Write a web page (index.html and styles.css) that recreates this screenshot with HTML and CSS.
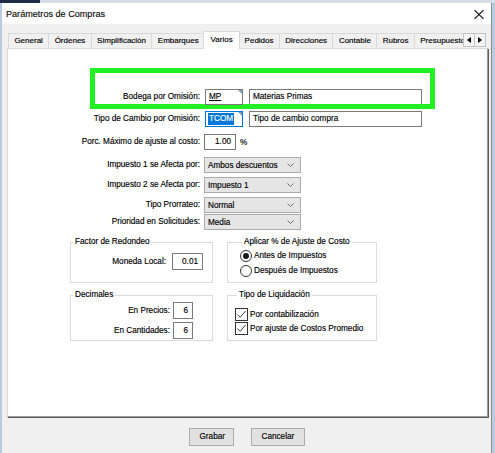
FILE: index.html
```html
<!DOCTYPE html>
<html lang="es">
<head>
<meta charset="utf-8">
<title>Parámetros de Compras</title>
<link rel="stylesheet" href="styles.css">
</head>
<body>
<div class="desk"><div class="desk-dark"></div></div>
<div class="window">
  <div class="titlebar">
    <span class="title">Parámetros de Compras</span>
    <svg class="close" width="10" height="9" viewBox="0 0 10 9"><path d="M0.5 0L9.5 9M9.5 0L0.5 9" stroke="#1a1a1a" stroke-width="1.1" fill="none"/></svg>
  </div>
  <div class="content">
    <div class="tabs">
      <div class="tablist">
        <div class="tab">General</div>
        <div class="tab">Órdenes</div>
        <div class="tab">Simplificación</div>
        <div class="tab">Embarques</div>
        <div class="tab active">Varios</div>
        <div class="tab">Pedidos</div>
        <div class="tab">Direcciones</div>
        <div class="tab">Contable</div>
        <div class="tab">Rubros</div>
        <div class="tab">Presupuestos</div>
      </div>
      <div class="tab-scroll">
        <div class="scroll-btn"><svg width="4" height="6" viewBox="0 0 4 6"><path d="M4 0L0 3L4 6Z" fill="#000"/></svg></div>
        <div class="scroll-btn"><svg width="4" height="6" viewBox="0 0 4 6"><path d="M0 0L4 3L0 6Z" fill="#000"/></svg></div>
      </div>
    </div>
    <div class="panel">
      <div class="highlight"></div>
      <div class="form">
        <label class="lbl">Bodega por Omisión:</label>
        <div class="ctrl"><div class="input code lookup"><u>MP</u></div><div class="input desc">Materias Primas</div></div>

        <label class="lbl">Tipo de Cambio por Omisión:</label>
        <div class="ctrl"><div class="input code lookup focus"><span class="sel">TCOM</span></div><div class="input desc">Tipo de cambio compra</div></div>

        <label class="lbl">Porc. Máximo de ajuste al costo:</label>
        <div class="ctrl"><div class="input num pct">1.00</div><span class="unit">%</span></div>

        <label class="lbl">Impuesto 1 se Afecta por:</label>
        <div class="ctrl"><div class="select"><span>Ambos descuentos</span><svg width="7" height="4" viewBox="0 0 7 4"><path d="M0.5 0.5L3.5 3.5L6.5 0.5" stroke="#707070" fill="none"/></svg></div></div>

        <label class="lbl">Impuesto 2 se Afecta por:</label>
        <div class="ctrl"><div class="select"><span>Impuesto 1</span><svg width="7" height="4" viewBox="0 0 7 4"><path d="M0.5 0.5L3.5 3.5L6.5 0.5" stroke="#707070" fill="none"/></svg></div></div>

        <label class="lbl">Tipo Prorrateo:</label>
        <div class="ctrl"><div class="select"><span>Normal</span><svg width="7" height="4" viewBox="0 0 7 4"><path d="M0.5 0.5L3.5 3.5L6.5 0.5" stroke="#707070" fill="none"/></svg></div></div>

        <label class="lbl">Prioridad en Solicitudes:</label>
        <div class="ctrl"><div class="select"><span>Media</span><svg width="7" height="4" viewBox="0 0 7 4"><path d="M0.5 0.5L3.5 3.5L6.5 0.5" stroke="#707070" fill="none"/></svg></div></div>
      </div>

      <div class="groups">
        <fieldset class="fs fs-factor">
          <legend>Factor de Redondeo</legend>
          <div class="frow"><span>Moneda Local:</span><div class="input num money">0.01</div></div>
        </fieldset>
        <fieldset class="fs fs-ajuste">
          <legend>Aplicar % de Ajuste de Costo</legend>
          <div class="opt"><span class="radio on"></span><span>Antes de Impuestos</span></div>
          <div class="opt"><span class="radio"></span><span>Después de Impuestos</span></div>
        </fieldset>
        <fieldset class="fs fs-dec">
          <legend>Decimales</legend>
          <div class="frow"><span>En Precios:</span><div class="input num dec">6</div></div>
          <div class="frow"><span>En Cantidades:</span><div class="input num dec">6</div></div>
        </fieldset>
        <fieldset class="fs fs-liq">
          <legend>Tipo de Liquidación</legend>
          <div class="opt chk-row"><span class="check"><svg width="11" height="11" viewBox="0 0 11 11"><path d="M1.5 5.5L4.2 8.3L9.6 2" stroke="#3a3a3a" stroke-width="1" fill="none"/></svg></span><span>Por contabilización</span></div>
          <div class="opt chk-row"><span class="check"><svg width="11" height="11" viewBox="0 0 11 11"><path d="M1.5 5.5L4.2 8.3L9.6 2" stroke="#3a3a3a" stroke-width="1" fill="none"/></svg></span><span>Por ajuste de Costos Promedio</span></div>
        </fieldset>
      </div>
    </div>
    <div class="actions">
      <button class="btn">Grabar</button>
      <button class="btn">Cancelar</button>
    </div>
  </div>
</div>
</body>
</html>
```

FILE: styles.css
```css
* { box-sizing: border-box; }
html, body { margin: 0; padding: 0; }
body {
  width: 495px;
  height: 453px;
  overflow: hidden;
  background: #b9cbe0;
  font-family: "Liberation Sans", Arial, sans-serif;
  font-size: 8.2px;
  color: #000;
  -webkit-text-stroke: 0.15px #000;
}
.desk { height: 3px; display: flex; background: #d4dce6; }
.desk-dark { width: 40px; background: #1e2c48; }

.window {
  margin-left: 2px;
  width: 490px;
  height: 450px;
  background: #f0f0f0;
  border-right: 1px solid #8d8d8d;
  display: flex;
  flex-direction: column;
}
.titlebar {
  height: 21px;
  background: #fff;
  display: flex;
  align-items: center;
  justify-content: space-between;
  padding: 0 7px 0 4px;
}
.title { font-size: 9.1px; color: #111; }
.close { display: block; margin-top: 1px; }

.content {
  flex: 1;
  display: flex;
  flex-direction: column;
  padding: 7px 3px 0 5px;
}

/* tabs */
.tabs { height: 18px; display: flex; }
.tablist {
  width: 456px;
  height: 18px;
  overflow: hidden;
  display: flex;
  align-items: flex-start;
  padding-left: 1px;
}
.tab {
  flex: none;
  height: 15px;
  margin-top: 2px;
  margin-left: -1px;
  padding: 0 5.4px;
  line-height: 14px;
  font-size: 8px;
  background: #f0f0f0;
  border: 1px solid #d9d9d9;
  border-bottom: none;
  white-space: nowrap;
}
.tab:first-child { margin-left: 0; }
.tab.active {
  position: relative;
  z-index: 2;
  height: 18px;
  margin-top: 0;
  margin-left: -2px;
  margin-right: -1px;
  padding: 0 6.5px;
  line-height: 16px;
  background: #fff;
}
.tab-scroll { display: flex; margin-top: 2px; }
.scroll-btn {
  width: 12px;
  height: 14px;
  margin-right: -1px;
  border: 1px solid #c4c4c4;
  background: #f3f3f3;
  display: flex;
  align-items: center;
  justify-content: center;
}

/* panel */
.panel {
  position: relative;
  flex: 1;
  margin-top: -1px;
  background: #fff;
  border: 1px solid #d9d9d9;
  border-right-color: #9a9a9a;
  border-bottom-color: #9a9a9a;
  box-shadow: 1px 1px 0 #5f5f5f;
  padding-top: 40px;
}
.highlight {
  position: absolute;
  left: 82px;
  top: 19px;
  width: 345px;
  height: 41px;
  border: 5px solid #22f022;
  pointer-events: none;
}

.form {
  display: grid;
  grid-template-columns: 192px auto;
  grid-template-rows: 22px 23px 23px 20px 20px 17px 16px;
  column-gap: 4px;
  align-items: start;
}
.lbl {
  text-align: right;
  line-height: 16px;
  white-space: nowrap;
}
.ctrl { display: flex; align-items: center; height: 16px; }

.input {
  height: 16px;
  border: 1px solid #7a7a7a;
  background: #fff;
  padding: 0 3px;
  line-height: 14px;
  white-space: nowrap;
  overflow: hidden;
}
.code { width: 38px; margin-left: 1px; position: relative; }
.desc { width: 173px; margin-left: 6px; }
.lookup::after {
  content: "";
  position: absolute;
  top: 0;
  right: 0;
  border-style: solid;
  border-width: 0 4px 4px 0;
  border-color: transparent #7d9cc4 transparent transparent;
}
.focus { border-color: #0078d7; padding-left: 2px; }
.sel { background: #0078d7; color: #fff; -webkit-text-stroke: 0.15px #fff; display: inline-block; line-height: 12px; padding: 0 1px; }
.num { text-align: right; }
.pct { width: 32px; padding-right: 4px; }
.unit { margin-left: 4px; }

.select {
  width: 97px;
  height: 16px;
  border: 1px solid #acacac;
  background: #e5e5e5;
  display: flex;
  align-items: center;
  justify-content: space-between;
  padding: 0 6px 0 3px;
}

/* groups */
.groups {
  display: grid;
  grid-template-columns: 143px 150px;
  grid-template-rows: 46px 51px;
  column-gap: 14px;
  row-gap: 7px;
  margin: 7px 0 0 62px;
}
.fs {
  margin: 0;
  min-width: 0;
  border: 1px solid #dcdcdc;
  padding: 0;
}
.fs legend {
  margin-left: 2px;
  padding: 0 2px;
  line-height: 10px;
}
.fs-factor { padding: 6px 9px 0 0; }
.frow {
  display: flex;
  justify-content: flex-end;
  align-items: center;
  gap: 6px;
}
.money { width: 31px; height: 17px; line-height: 15px; padding-right: 4px; }
.fs-ajuste { padding: 1px 0 0 12px; }
.opt { display: flex; align-items: center; height: 15px; gap: 2px; }
.radio {
  width: 12px;
  height: 12px;
  border: 1px solid #333;
  border-radius: 50%;
  background: #fff;
  display: flex;
  align-items: center;
  justify-content: center;
}
.radio.on::before {
  content: "";
  width: 6px;
  height: 6px;
  border-radius: 50%;
  background: #1a1a1a;
}
.fs-dec { padding: 2px 19px 0 0; display: flex; flex-direction: column; gap: 3px; }
.fs-dec .frow { gap: 3px; }
.dec { width: 20px; height: 17px; line-height: 15px; padding-right: 4px; }
.fs-liq { padding: 8px 0 0 7px; }
.chk-row { height: 13px; margin-bottom: 1px; }
.check {
  width: 13px;
  height: 13px;
  border: 1px solid #333;
  background: #fff;
  display: flex;
  align-items: center;
  justify-content: center;
}
.check svg { display: block; }

/* actions */
.actions {
  height: 36px;
  flex: none;
  display: flex;
  justify-content: center;
  align-items: flex-start;
  gap: 17px;
  padding-top: 11px;
  padding-right: 2px;
}
.btn {
  height: 18px;
  padding: 0 10px;
  margin: 0;
  border: 1px solid #adadad;
  background: #e1e1e1;
  font-family: inherit;
  font-size: 8.2px;
  color: #000;
  line-height: 16px;
}
.btn:first-child { width: 45px; }
.btn:last-child { width: 54px; }
```
